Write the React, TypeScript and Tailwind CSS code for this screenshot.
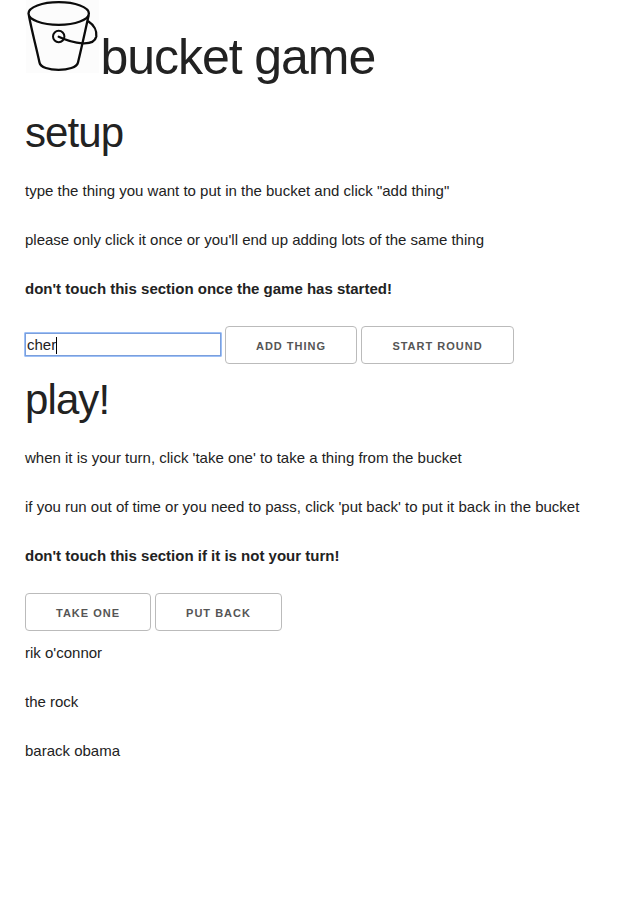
import React from "react";

function Heading({ children }: { children: React.ReactNode }) {
  return <h2 className="mb-5 text-[42px] leading-[52px] tracking-[-0.9px]">{children}</h2>;
}

function Note({ children, bold = false }: { children: React.ReactNode; bold?: boolean }) {
  return <p className={`mb-[25px] text-[15px] leading-6 whitespace-nowrap ${bold ? "font-bold" : ""}`}>{children}</p>;
}

function Button({ children, width }: { children: React.ReactNode; width: string }) {
  return (
    <button className={`h-[38px] shrink-0 rounded-[4px] border border-[#bbb] pt-[2px] text-[11px] font-semibold tracking-[1px] text-[#555] ${width}`}>
      {children}
    </button>
  );
}

function Bucket() {
  return (
    <svg className="h-[73px] w-[75px] shrink-0" viewBox="0 0 75 73" fill="none" stroke="#0b0b0b" strokeWidth="2.3" strokeLinecap="round">
      <rect x="1" width="73" height="73" fill="#fcfcfc" stroke="none" />
      <ellipse cx="33.7" cy="13.5" rx="30.2" ry="11.3" />
      <path d="M4 16C7 32 11 46 14.5 62.5C16 72.3 51 72.3 53 62.5C57 46 60 32 63.5 16" />
      <path d="M63.5 21.5C69 25 72 31 71.3 36.5C69 47 49 44 33.7 36.7" />
      <circle cx="33.7" cy="36.5" r="5.7" strokeWidth="2" />
    </svg>
  );
}

export default function App() {
  return (
    <main className="min-h-[918px] bg-white pl-[25px] font-['Liberation_Sans',Arial,sans-serif] text-[#222]">
      <header className="flex h-[107px] items-start">
        <Bucket />
        <h1 className="mt-[27px] ml-[0.5px] text-[50px] leading-[60px] tracking-[-1.05px]">bucket game</h1>
      </header>
      <section>
        <Heading>setup</Heading>
        <Note>type the thing you want to put in the bucket and click "add thing"</Note>
        <Note>please only click it once or you'll end up adding lots of the same thing</Note>
        <Note bold>don't touch this section once the game has started!</Note>
        <div className="flex items-center gap-1">
          <div className="-mt-px -mr-px -ml-px flex h-[25px] w-[198px] items-center rounded-[1px] border border-[#9dc0f7] text-[15px]">
            <div className="flex h-full w-full items-center border border-[#7b9fdc] pt-px pl-px">
              cher<span className="h-[17px] w-px bg-black" />
            </div>
          </div>
          <Button width="w-[132px]">ADD THING</Button>
          <Button width="w-[153px]">START ROUND</Button>
        </div>
      </section>
      <section className="mt-[10px]">
        <Heading>play!</Heading>
        <Note>when it is your turn, click 'take one' to take a thing from the bucket</Note>
        <Note>if you run out of time or you need to pass, click 'put back' to put it back in the bucket</Note>
        <Note bold>don't touch this section if it is not your turn!</Note>
        <div className="mb-[10px] flex gap-1">
          <Button width="w-[126px]">TAKE ONE</Button>
          <Button width="w-[127px]">PUT BACK</Button>
        </div>
        <Note>rik o'connor</Note>
        <Note>the rock</Note>
        <Note>barack obama</Note>
      </section>
    </main>
  );
}
